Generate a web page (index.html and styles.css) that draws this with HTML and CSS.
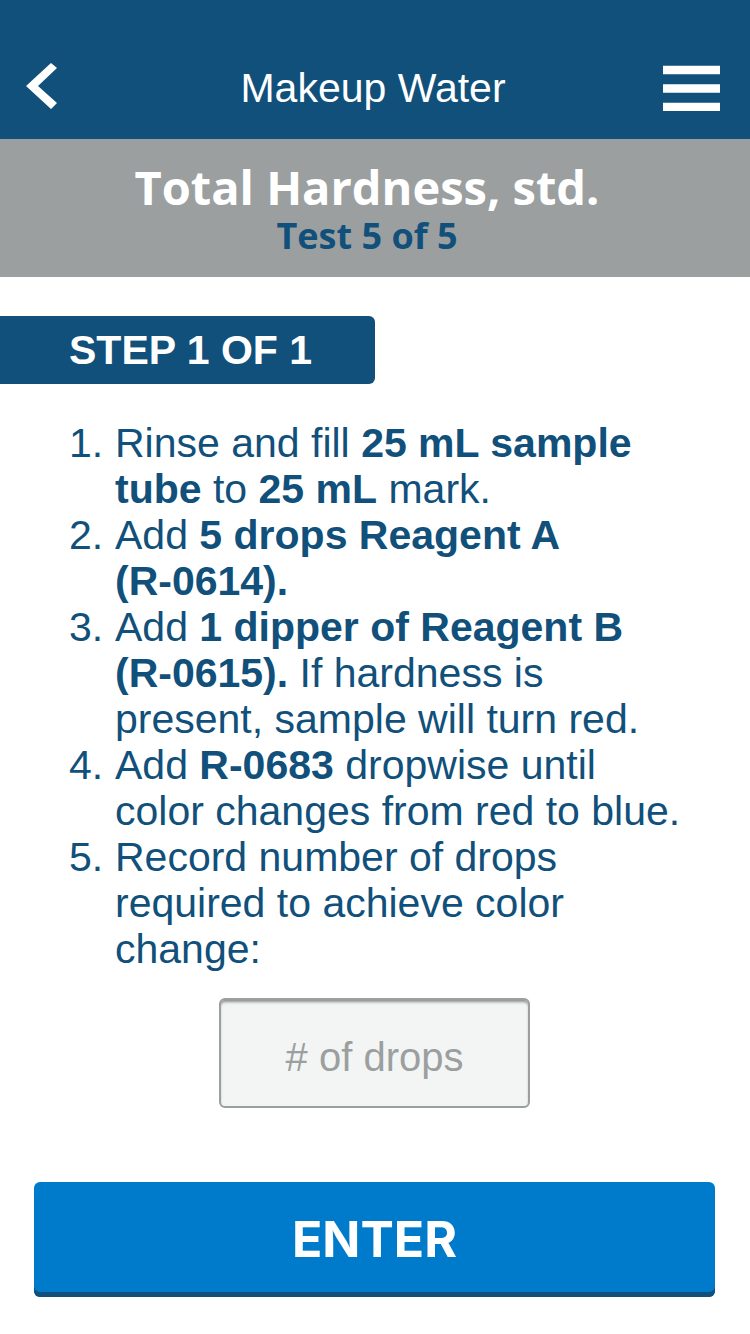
FILE: index.html
```html
<!DOCTYPE html>
<html lang="en">
<head>
<meta charset="utf-8">
<meta name="viewport" content="width=device-width, initial-scale=1">
<title>Makeup Water</title>
<link rel="stylesheet" href="styles.css">
</head>
<body>
<header class="topbar">
  <button class="icon-button" type="button" aria-label="Back">
    <svg class="back-icon" viewBox="0 0 32 48" aria-hidden="true"><path d="M0 25L25 2L31 7L12 25L31 42L25 48Z" fill="#fff"/></svg>
  </button>
  <h1 class="topbar-title">Makeup Water</h1>
  <button class="icon-button icon-button-end" type="button" aria-label="Menu">
    <svg class="menu-icon" viewBox="0 0 57 46" aria-hidden="true"><path d="M0 5H57M0 23.500H57M0 42H57" fill="none" stroke="#fff" stroke-width="8.700"/></svg>
  </button>
</header>
<section class="test-header">
  <h2 class="test-title">Total Hardness, std.</h2>
  <p class="test-count">Test 5 of 5</p>
</section>
<main class="content">
  <h3 class="step">STEP 1 OF 1</h3>
  <form class="form">
    <ol class="instructions">
      <li>Rinse and fill <b>25 mL sample tube</b> to <b>25 mL</b> mark.</li>
      <li>Add <b>5 drops Reagent A <span class="part">(R-0614).</span></b></li>
      <li>Add <b>1 dipper of Reagent B <span class="part">(R-0615).</span></b> If hardness is present, sample will turn red.</li>
      <li>Add <b class="part">R-0683</b> dropwise until color changes from red to blue.</li>
      <li>Record number of drops required to achieve color change:</li>
    </ol>
    <input class="drops" type="text" inputmode="numeric" placeholder="# of drops" aria-label="Number of drops">
    <button class="enter" type="submit">ENTER</button>
  </form>
</main>
</body>
</html>
```
FILE: styles.css
```css
* { box-sizing: border-box; }
body {
  margin: 0;
  background: #fff;
  color: #10507b;
  font-family: "Liberation Sans", Arial, sans-serif;
}
h1, h2, h3, p, ol { margin: 0; padding: 0; }
.topbar {
  display: grid;
  grid-template-columns: 1fr auto 1fr;
  align-items: center;
  padding: 40px 30px 4px 26px;
  min-height: 139px;
  background: #10507b;
  color: #fff;
}
.icon-button {
  display: flex;
  justify-self: start;
  padding: 0;
  border: 0;
  background: none;
}
.icon-button-end { justify-self: end; }
.topbar-title { font-size: 41px; line-height: 48px; font-weight: 400; }
.back-icon { width: 32px; height: 48px; margin-bottom: 6px; }
.menu-icon { width: 57px; height: 46px; }
.test-header {
  padding: 22px 16px 18px 0;
  background: #9c9f9f;
  text-align: center;
  font-family: "Open Sans", sans-serif;
}
.test-title { color: #fff; font-size: 47px; line-height: 52px; font-weight: 700; }
.test-count { font-size: 36px; line-height: 46px; font-weight: 700; }
.content { padding-top: 39px; }
.step {
  width: 50%;
  padding: 10px 0 10px 69px;
  border-radius: 0 6px 6px 0;
  background: #10507b;
  color: #fff;
  font-size: 41px;
  line-height: 48px;
}
.form {
  display: flex;
  flex-direction: column;
  padding: 36px 35px 0 34px;
}
.instructions {
  list-style: none;
  counter-reset: step;
  padding: 0 24px 0 81px;
  font-size: 41px;
  line-height: 46px;
}
.instructions li { counter-increment: step; }
.instructions li::before {
  content: counter(step) ".";
  display: inline-block;
  width: 46px;
  margin-left: -46px;
}
.part { white-space: nowrap; }
.drops {
  align-self: center;
  width: 311px;
  height: 110px;
  margin: 26px 0 74px;
  padding: 8px 0 0;
  border: 2px solid #9c9f9f;
  border-radius: 6px;
  background: #f3f5f4;
  box-shadow: inset 0 3px 3px -1px #8c8f8f;
  color: #10507b;
  font: 40px "Liberation Sans", Arial, sans-serif;
  text-align: center;
}
.drops::placeholder { color: #9c9f9f; opacity: 1; }
.enter {
  height: 115px;
  padding: 0 0 2px;
  border: 0;
  border-radius: 6px;
  background: #007acb;
  box-shadow: inset 0 -5px 0 #10507b;
  color: #fff;
  font: 700 50px Inter, sans-serif;
}
```
